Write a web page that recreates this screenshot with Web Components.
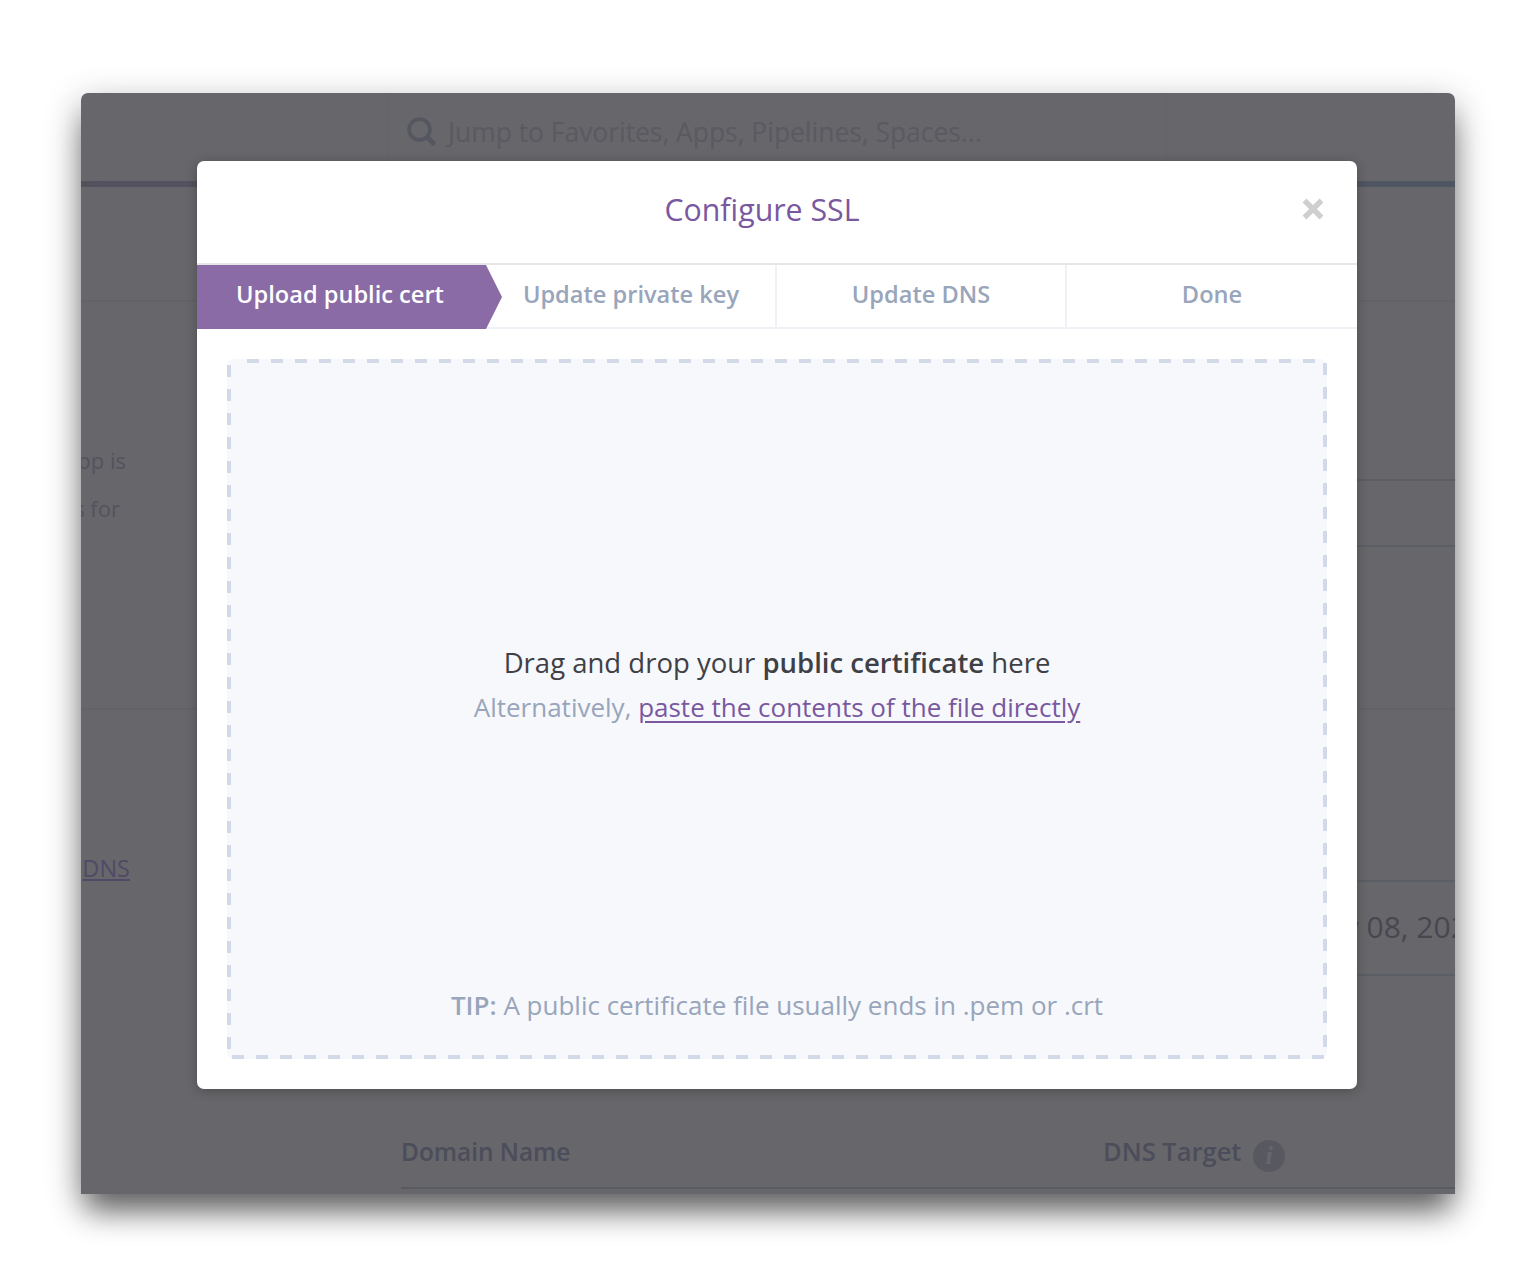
<!DOCTYPE html>
<html>
<head>
<meta charset="utf-8">
<title>Configure SSL</title>
<style>
  html, body { margin: 0; background: #fff; }
  body { padding: 93px 82px 93px 81px; font-family: "Open Sans", "Liberation Sans", sans-serif; }
</style>
</head>
<body>
<app-window>
  <app-page></app-page>
  <ssl-modal slot="modal" heading="Configure SSL">
    <step-tabs></step-tabs>
    <drop-zone></drop-zone>
  </ssl-modal>
</app-window>

<script>
class AppWindow extends HTMLElement {
  constructor() {
    super()
    this.attachShadow({ mode: 'open' }).innerHTML = `
      <style>
        :host { display: block; position: relative; width: 1374px; height: 1101px; border-radius: 7px 7px 0 0;
          box-shadow: 0 22px 30px -6px rgba(0,0,0,.5), 0 10px 36px rgba(0,0,0,.3); }
        .clip { position: relative; height: 100%; overflow: hidden; border-radius: 7px 7px 0 0; background: #fff; }
        .overlay { position: absolute; inset: 0; background: rgba(1,0,6,.6); display: flex; align-items: flex-start; padding: 68px 0 0 116px; }
      </style>
      <div class="clip">
        <slot></slot>
        <div class="overlay"><slot name="modal"></slot></div>
      </div>`
  }
}
customElements.define('app-window', AppWindow)

class AppPage extends HTMLElement {
  constructor() {
    super()
    this.attachShadow({ mode: 'open' }).innerHTML = `
      <style>
        :host { display: block; height: 100%; color: #cdd0e6; font-size: 22px; }
        .top { height: 88px; display: flex; padding-left: 307px; }
        .search { width: 779px; display: flex; align-items: center; gap: 11px; padding: 0 0 10px 18px; box-sizing: border-box;
          border: solid #f5f5f7; border-width: 0 1px; color: #e0e0ea; font-size: 26.4px; white-space: nowrap; }
        .bar { height: 6px; background: linear-gradient(90deg, #d0cbe0, #c6d8e8 80%, #c6d8e8); }
        .r1 { height: 115px; border-bottom: 2px solid #f5f4f6; box-sizing: border-box; }
        .split { display: grid; grid-template-columns: 320px 1fr; box-sizing: border-box; }
        .r2 { height: 408px; border-bottom: 2px solid #f5f4f6; }
        .side { display: flex; flex-direction: column; align-items: flex-end; width: 45px; overflow: hidden; white-space: nowrap; line-height: 48px; padding-top: 134px; }
        .side.two { width: 39px; padding-top: 0; }
        .rows { margin-top: 177px; height: 64px; border: solid #e1ebf3; border-width: 2px 0; }
        .r3 { height: 419px; }
        .dns { width: 49px; padding-top: 134px; line-height: 48px; font-size: 23.5px; color: #c6b9f7; text-decoration: underline; overflow: hidden; display: flex; justify-content: flex-end; }
        .when { margin-top: 170px; height: 88px; border: solid #e1ebf3; border-width: 2px 0; display: flex; align-items: center; padding: 0 0 4px 899px; font-size: 30px; color: #b2b2be; white-space: nowrap; }
        .head { display: flex; align-items: center; margin-left: 320px; height: 60px; padding-bottom: 14px; border-bottom: 2px solid #dde3ea; box-sizing: border-box; font-weight: 600; font-size: 24.4px; color: #b9c0d9; white-space: nowrap; }
        .head span:first-child { width: 702px; }
        .head span + span { width: 150px; font-size: 25.5px; }
        .info { width: 32px; height: 32px; border-radius: 50%; background: #d6dce6; color: #fff; display: inline-flex; align-items: center; justify-content: center;
          font: italic 700 26px "Liberation Serif", serif; margin-top: 10px; }
      </style>
      <div class="top">
        <div class="search">
          <svg width="30" height="30" viewBox="0 0 30 30" fill="none" stroke="#cfd7e6" stroke-width="3.6"><circle cx="12.5" cy="12.5" r="10.4"/><path d="M20.5 20.5l7 7" stroke-width="4.6"/></svg>
          <span>Jump to Favorites, Apps, Pipelines, Spaces...</span>
        </div>
      </div>
      <div class="bar"></div>
      <div class="r1"></div>
      <div class="split r2">
        <div>
          <div class="side">app is</div>
          <div class="side two">s for</div>
        </div>
        <div class="rows"></div>
      </div>
      <div class="split r3">
        <div><div class="dns">DNS</div></div>
        <div class="when">May 08, 2021</div>
      </div>
      <div class="head"><span>Domain Name</span><span>DNS Target</span><i class="info">i</i></div>`
  }
}
customElements.define('app-page', AppPage)

class SslModal extends HTMLElement {
  constructor() {
    super()
    this.attachShadow({ mode: 'open' }).innerHTML = `
      <style>
        :host { display: block; flex: none; width: 1160px; height: 928px; background: #fff; border-radius: 7px; overflow: hidden;
          box-shadow: 0 2px 12px rgba(0,0,0,.25); }
        header { display: flex; align-items: center; justify-content: center; position: relative; border-bottom: 2px solid #e6e6e6; color: #79589f; font-size: 30.3px; padding: 0 30px 6px 0; height: 96px; }
        button { position: absolute; right: 33px; top: 37px; width: 22px; height: 22px; padding: 0; border: 0; background: none; }
      </style>
      <header>
        <span id="t"></span>
        <button aria-label="Close"><svg width="22" height="22" viewBox="0 0 22 22" stroke="#cfcfcf" stroke-width="5.4" style="display:block"><path d="M2.5 2.5l17 17M19.5 2.5l-17 17"/></svg></button>
      </header>
      <slot></slot>`
    this.shadowRoot.getElementById('t').textContent = this.getAttribute('heading')
  }
}
customElements.define('ssl-modal', SslModal)

class StepTabs extends HTMLElement {
  constructor() {
    super()
    this.attachShadow({ mode: 'open' }).innerHTML = `
      <style>
        :host { display: grid; grid-template-columns: repeat(4, 290px); height: 62px; font-size: 23.6px; font-weight: 600; color: #98a5ba; border-bottom: 2px solid #eef1f6; }
        div { display: flex; align-items: center; justify-content: center; white-space: nowrap; border-right: 2px solid #eef1f6; box-sizing: border-box; position: relative; padding-bottom: 6px; }
        div:last-child { border-right: 0; }
        .on { width: 289px; height: 64px; color: #fff; background: #8a6ba6; border-right: 0; padding: 0 3px 6px 0; }
        .on::after { content: ""; position: absolute; left: 100%; top: 0; width: 16px; height: 64px; background: #8a6ba6; clip-path: polygon(0 0, 100% 50%, 0 100%); }
      </style>
      <div class="on">Upload public cert</div>
      <div>Update private key</div>
      <div>Update DNS</div>
      <div>Done</div>`
  }
}
customElements.define('step-tabs', StepTabs)

class DropZone extends HTMLElement {
  constructor() {
    super()
    this.attachShadow({ mode: 'open' }).innerHTML = `
      <style>
        :host { display: block; position: relative; width: 1100px; height: 700px; margin: 30px 0 0 30px; background: #f6f8fc; border-radius: 7px; box-sizing: border-box; text-align: center; padding-top: 284px; }
        svg { position: absolute; inset: 0; }
        line { stroke: #d2d9e9; stroke-width: 4; stroke-dasharray: 12 12; }
        p { margin: 0; }
        .main { color: #3f4045; font-size: 27.5px; line-height: 40px; }
        b { font-weight: 600; }
        .alt { color: #98a5ba; font-size: 26px; line-height: 40px; margin-top: 4px; }
        a { color: #79589f; text-decoration: underline; text-underline-offset: 4px; }
        .tip { position: absolute; left: 0; right: 0; bottom: 36px; color: #98a5ba; font-size: 26px; line-height: 36px; }
      </style>
      <svg width="1100" height="700" aria-hidden="true">
        <line x1="20" y1="2" x2="1088" y2="2"/>
        <line x1="5" y1="698" x2="1097" y2="698"/>
        <line x1="2" y1="6" x2="2" y2="690"/>
        <line x1="1098" y1="4" x2="1098" y2="688"/>
      </svg>
      <p class="main">Drag and drop your <b>public certificate</b> here</p>
      <p class="alt">Alternatively, <a>paste the contents of the file directly</a></p>
      <p class="tip"><b>TIP:</b> A public certificate file usually ends in .pem or .crt</p>`
  }
}
customElements.define('drop-zone', DropZone)
</script>
</body>
</html>
